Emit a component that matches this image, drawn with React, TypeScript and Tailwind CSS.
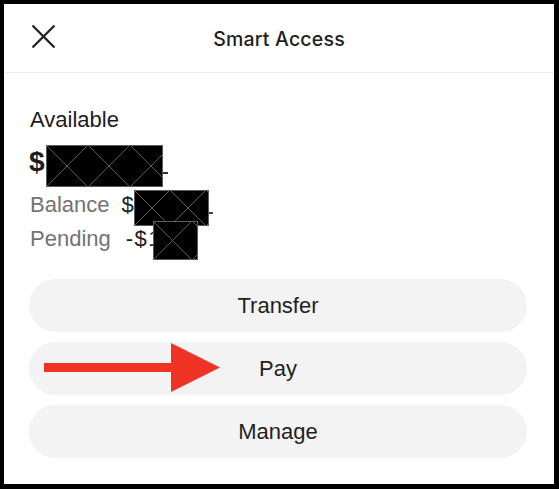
interface redactI {
  w: number;
  h: number;
}

// black box with the X lattice that hides the amounts
const Redact = ({ w, h }: redactI) => {
  const cells = Math.ceil(w / h);
  return (
    <svg width={w} height={h} className="block shrink-0">
      <rect x={0.5} y={0.5} width={w - 1} height={h - 1} fill="#000" stroke="#5c5c5c" strokeWidth={1} />
      {Array.from({ length: cells }).map((_, i) => (
        <g key={i} stroke="#5c5c5c" strokeWidth={1}>
          <line x1={i * h} y1={0} x2={i * h + h} y2={h} />
          <line x1={i * h + h} y1={0} x2={i * h} y2={h} />
        </g>
      ))}
      <rect x={0.5} y={0.5} width={w - 1} height={h - 1} fill="none" stroke="#5c5c5c" strokeWidth={1} />
    </svg>
  );
};

const CloseIcon = () => (
  <svg width={25} height={25} viewBox="0 0 25 25" className="block">
    <path d="M1.5 1.5 L23.5 23.5 M23.5 1.5 L1.5 23.5" stroke="#222" strokeWidth={2.3} strokeLinecap="butt" fill="none" />
  </svg>
);

const Arrow = () => (
  <svg
    width={200}
    height={53}
    className="absolute left-0 top-0 overflow-visible pointer-events-none"
  >
    <rect x={15} y={21} width={128} height={9} fill="#ef3426" />
    <polygon points="142,1 142,50 191,25.5" fill="#ef3426" />
  </svg>
);

const buttonCls =
  "relative h-[53px] w-full rounded-full bg-[#f3f3f3] flex items-center justify-center text-[22px] text-[#1f1f1f]";

const App = () => {
  return (
    <div className="w-[559px] h-[489px] bg-white border-black border-l-4 border-t-4 border-r-[5px] border-b-[5px] flex flex-col font-['Liberation_Sans',Arial,sans-serif]">
      <div className="h-[69px] shrink-0 border-b border-[#ececec] relative flex items-center justify-center">
        <div className="absolute left-[27px] top-[20px]">
          <CloseIcon />
        </div>
        <h1 className="font-['Inter',sans-serif] font-medium text-[19.5px] text-[#1e1e1e] tracking-[0.2px] mt-[3px]">
          Smart Access
        </h1>
      </div>

      <div className="pl-[25px] pr-[27px] flex flex-col">
        <div className="pt-[35px] text-[22px] leading-[24px] text-[#1c1c1c] pl-px">
          Available
        </div>

        <div className="mt-[14px] h-[32px] flex items-start text-[28px] leading-[32px] font-bold text-[#1c1c1c]">
          <span>$</span>
          <div className="-mt-px ml-px">
            <Redact w={117} h={42} />
          </div>
          <span className="mt-[26px] w-[5px] h-[2px] bg-[#333]" />
        </div>

        <div className="mt-[15px] h-[24px] flex items-start text-[22px] leading-[24px] text-[#737373] pl-px">
          <span>Balance</span>
          <span className="ml-[12px] text-[#1c1c1c]">$</span>
          <div className="-mt-[3px]">
            <Redact w={75} h={36} />
          </div>
          <span className="mt-[19px] w-[4px] h-[2px] bg-[#444]" />
        </div>

        <div className="mt-[10px] h-[24px] flex items-start text-[22px] leading-[24px] text-[#737373] pl-px">
          <span>Pending</span>
          <span className="ml-[15px] text-[#1c1c1c] whitespace-nowrap tracking-[1.5px]">-$1</span>
          <div className="-mt-[6px] -ml-[9px] relative">
            <Redact w={45} h={39} />
          </div>
        </div>

        <div className="mt-[28px] flex flex-col gap-[10px]">
          <button className={buttonCls}>Transfer</button>
          <button className={buttonCls}>
            <Arrow />
            <span>Pay</span>
          </button>
          <button className={buttonCls}>Manage</button>
        </div>
      </div>
    </div>
  );
};

export default App;
